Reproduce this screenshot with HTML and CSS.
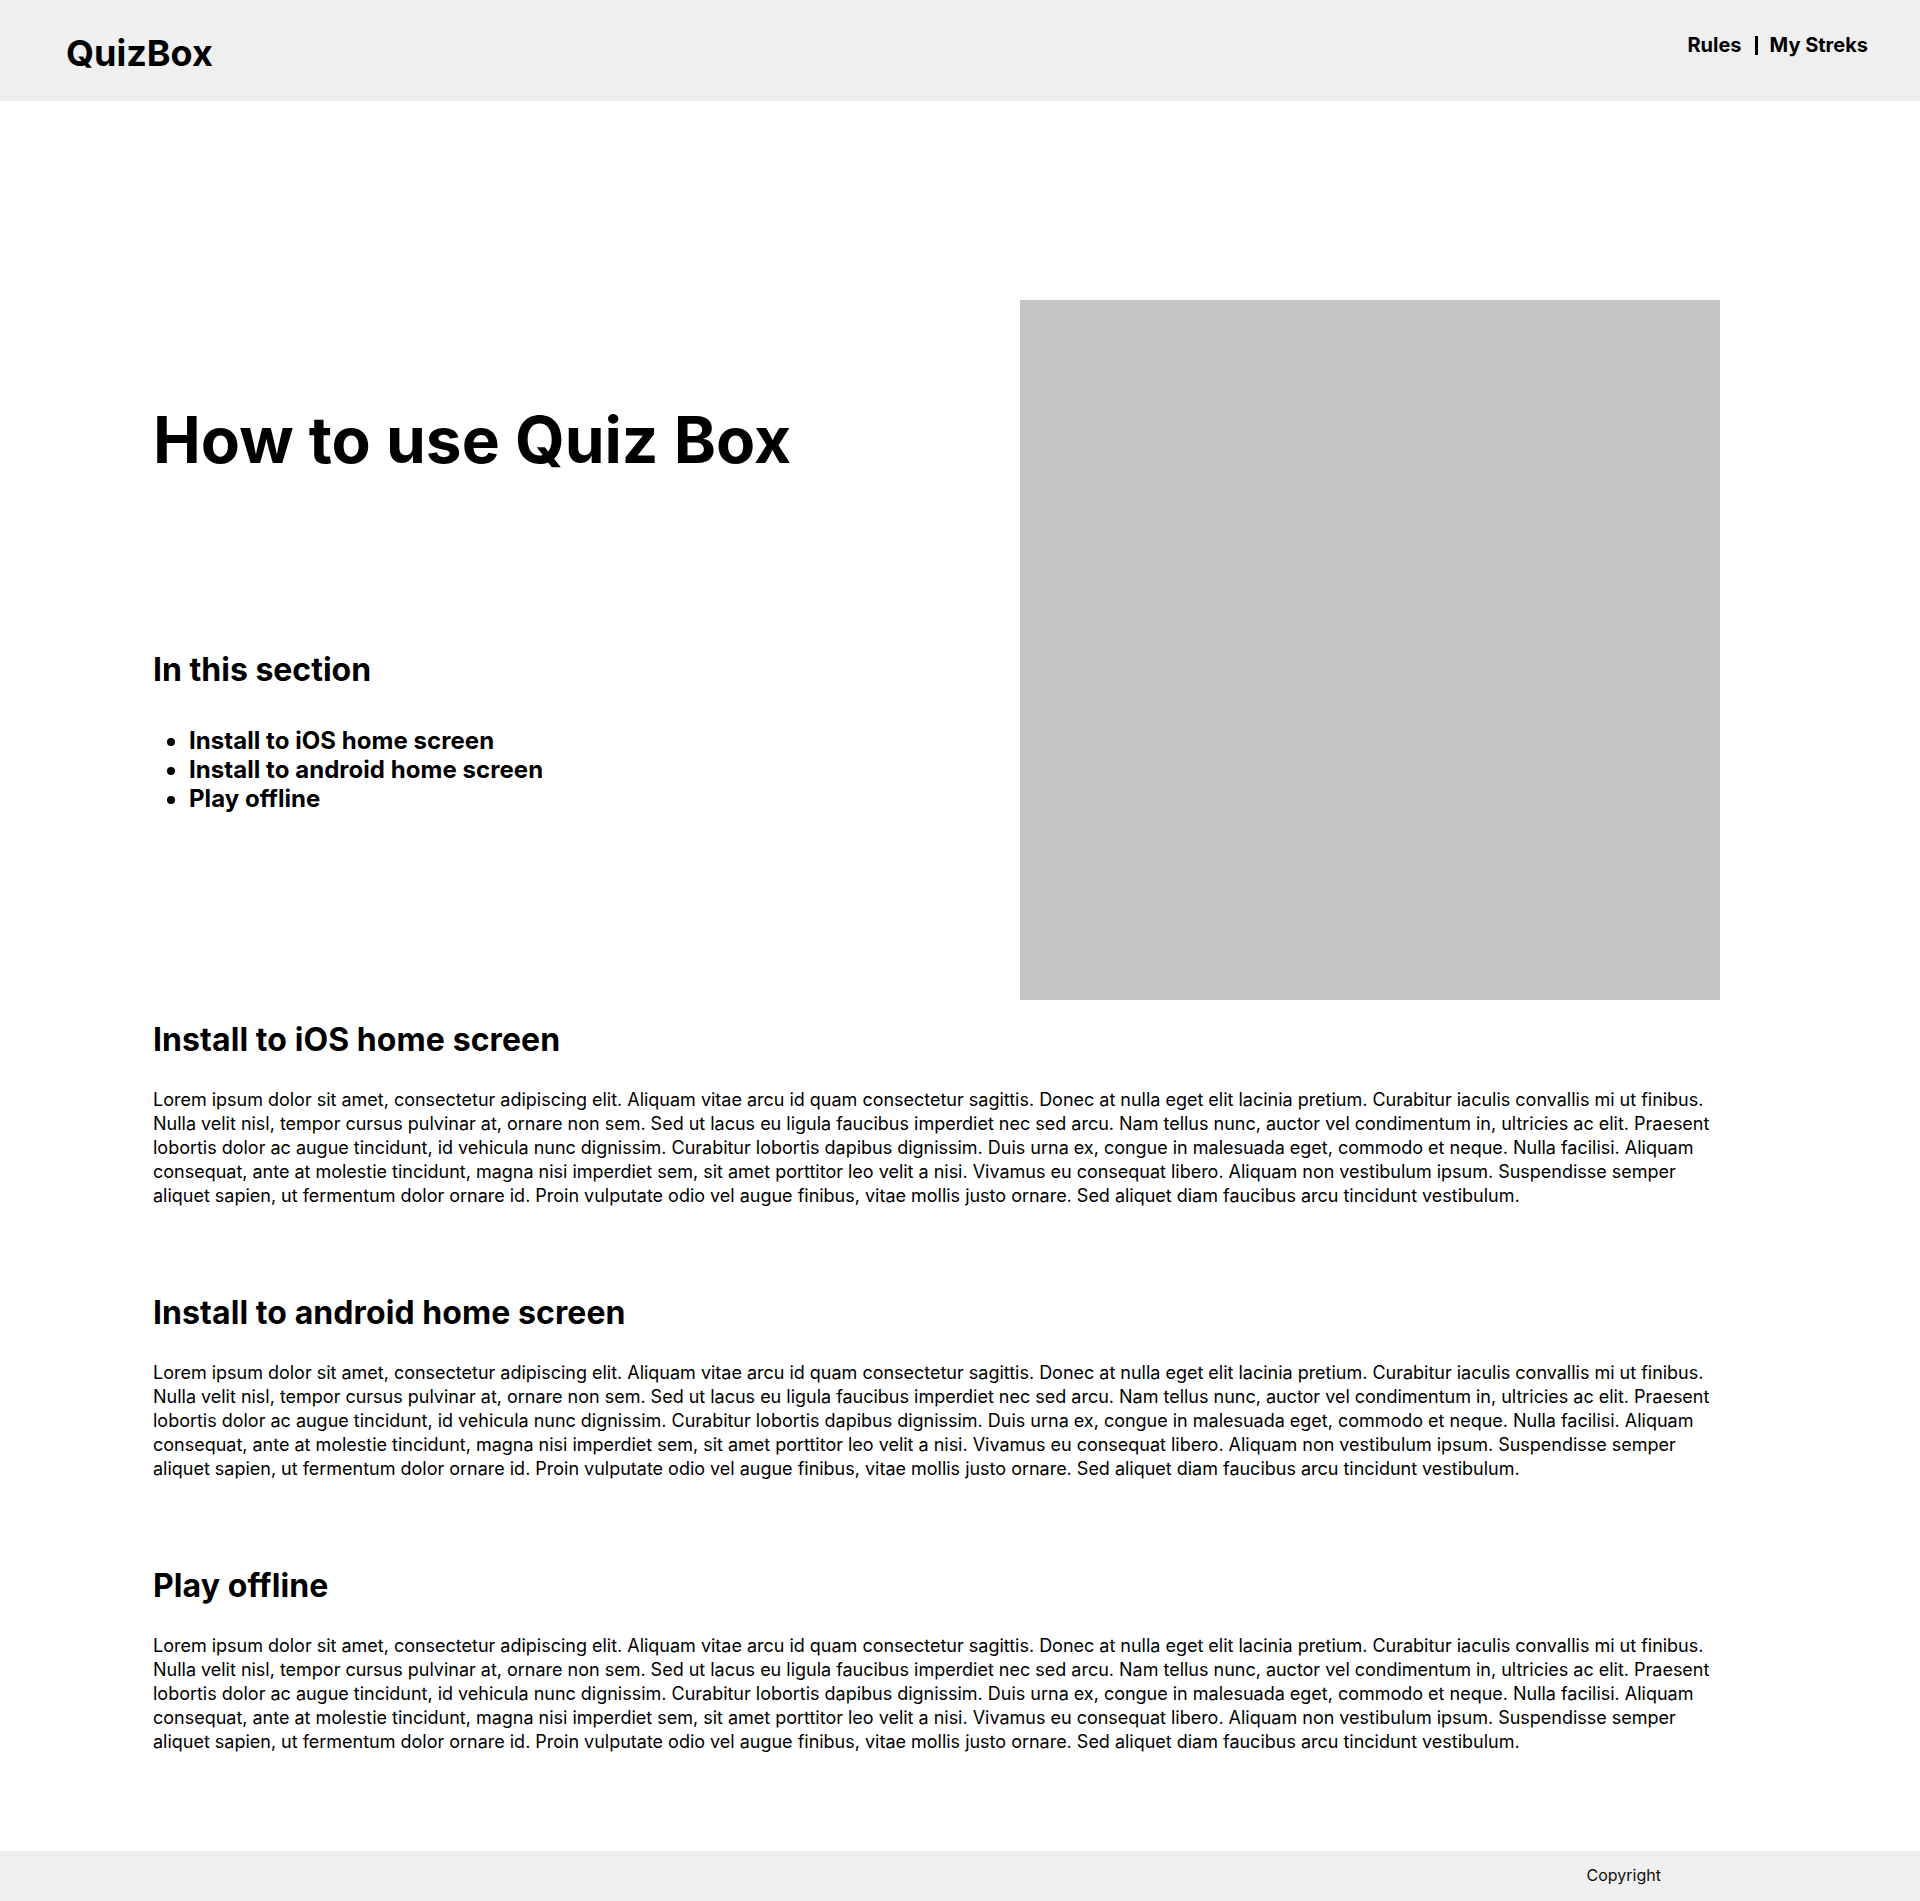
FILE: index.html
```html
<!DOCTYPE html>
<html lang="en">
<head>
<meta charset="utf-8">
<title>QuizBox - How to use</title>
<link rel="stylesheet" href="styles.css">
</head>
<body>
<header class="site-header">
  <h1 class="logo">QuizBox</h1>
  <nav class="nav">
    <a class="nav-link" href="#">Rules</a>
    <span class="nav-sep"></span>
    <a class="nav-link" href="#">My Streks</a>
  </nav>
</header>
<main class="main">
  <section class="hero">
    <div class="hero-text">
      <h2 class="hero-title">How to use Quiz Box</h2>
      <h3 class="toc-title">In this section</h3>
      <ul class="toc">
        <li>Install to iOS home screen</li>
        <li>Install to android home screen</li>
        <li>Play offline</li>
      </ul>
    </div>
    <div class="hero-image"></div>
  </section>
  <section class="article">
    <h3 class="article-title">Install to iOS home screen</h3>
    <p class="article-text">Lorem ipsum dolor sit amet, consectetur adipiscing elit. Aliquam vitae arcu id quam consectetur sagittis. Donec at nulla eget elit lacinia pretium. Curabitur iaculis convallis mi ut finibus. Nulla velit nisl, tempor cursus pulvinar at, ornare non sem. Sed ut lacus eu ligula faucibus imperdiet nec sed arcu. Nam tellus nunc, auctor vel condimentum in, ultricies ac elit. Praesent lobortis dolor ac augue tincidunt, id vehicula nunc dignissim. Curabitur lobortis dapibus dignissim. Duis urna ex, congue in malesuada eget, commodo et neque. Nulla facilisi. Aliquam consequat, ante at molestie tincidunt, magna nisi imperdiet sem, sit amet porttitor leo velit a nisi. Vivamus eu consequat libero. Aliquam non vestibulum ipsum. Suspendisse semper aliquet sapien, ut fermentum dolor ornare id. Proin vulputate odio vel augue finibus, vitae mollis justo ornare. Sed aliquet diam faucibus arcu tincidunt vestibulum.</p>
  </section>
  <section class="article">
    <h3 class="article-title">Install to android home screen</h3>
    <p class="article-text">Lorem ipsum dolor sit amet, consectetur adipiscing elit. Aliquam vitae arcu id quam consectetur sagittis. Donec at nulla eget elit lacinia pretium. Curabitur iaculis convallis mi ut finibus. Nulla velit nisl, tempor cursus pulvinar at, ornare non sem. Sed ut lacus eu ligula faucibus imperdiet nec sed arcu. Nam tellus nunc, auctor vel condimentum in, ultricies ac elit. Praesent lobortis dolor ac augue tincidunt, id vehicula nunc dignissim. Curabitur lobortis dapibus dignissim. Duis urna ex, congue in malesuada eget, commodo et neque. Nulla facilisi. Aliquam consequat, ante at molestie tincidunt, magna nisi imperdiet sem, sit amet porttitor leo velit a nisi. Vivamus eu consequat libero. Aliquam non vestibulum ipsum. Suspendisse semper aliquet sapien, ut fermentum dolor ornare id. Proin vulputate odio vel augue finibus, vitae mollis justo ornare. Sed aliquet diam faucibus arcu tincidunt vestibulum.</p>
  </section>
  <section class="article">
    <h3 class="article-title">Play offline</h3>
    <p class="article-text">Lorem ipsum dolor sit amet, consectetur adipiscing elit. Aliquam vitae arcu id quam consectetur sagittis. Donec at nulla eget elit lacinia pretium. Curabitur iaculis convallis mi ut finibus. Nulla velit nisl, tempor cursus pulvinar at, ornare non sem. Sed ut lacus eu ligula faucibus imperdiet nec sed arcu. Nam tellus nunc, auctor vel condimentum in, ultricies ac elit. Praesent lobortis dolor ac augue tincidunt, id vehicula nunc dignissim. Curabitur lobortis dapibus dignissim. Duis urna ex, congue in malesuada eget, commodo et neque. Nulla facilisi. Aliquam consequat, ante at molestie tincidunt, magna nisi imperdiet sem, sit amet porttitor leo velit a nisi. Vivamus eu consequat libero. Aliquam non vestibulum ipsum. Suspendisse semper aliquet sapien, ut fermentum dolor ornare id. Proin vulputate odio vel augue finibus, vitae mollis justo ornare. Sed aliquet diam faucibus arcu tincidunt vestibulum.</p>
  </section>
</main>
<footer class="site-footer">
  <span class="copyright">Copyright</span>
</footer>
</body>
</html>
```

FILE: styles.css
```css
* {
  box-sizing: border-box;
}

html, body {
  margin: 0;
  padding: 0;
}

body {
  font-family: Inter, "Noto Sans", sans-serif;
  color: #000;
  background: #fff;
  min-height: 100vh;
  display: flex;
  flex-direction: column;
}

.site-header {
  height: 101px;
  background: #efefef;
  display: flex;
  justify-content: space-between;
  align-items: flex-start;
  padding: 31px 52px 0 66px;
}

.logo {
  margin: 0;
  font-size: 36px;
  font-weight: 700;
  line-height: normal;
}

.nav {
  display: flex;
  align-items: flex-start;
  margin-top: 2px;
}

.nav-link {
  font-size: 20px;
  font-weight: 700;
  line-height: normal;
  color: #000;
  text-decoration: none;
}

.nav-sep {
  width: 3px;
  height: 19px;
  background: #000;
  margin: 3px 12px 0 13px;
}

.main {
  flex: 1;
  padding-left: 153px;
  width: 1720px;
}

.hero {
  display: flex;
  margin-top: 199px;
}

.hero-text {
  width: 867px;
  padding-top: 101px;
}

.hero-title {
  margin: 0;
  font-size: 64px;
  font-weight: 700;
  line-height: normal;
}

.toc-title {
  margin: 172px 0 0 0;
  font-size: 32px;
  font-weight: 700;
  line-height: normal;
}

.toc {
  margin: 37px 0 0 0;
  padding-left: 36px;
  font-size: 24px;
  font-weight: 700;
  line-height: normal;
  letter-spacing: 0.05px;
}

.hero-image {
  width: 700px;
  height: 700px;
  background: #c4c4c4;
  flex-shrink: 0;
}

.article {
  margin-top: 20px;
}

.article + .article {
  margin-top: 85px;
}

.article-title {
  margin: 0;
  font-size: 32px;
  font-weight: 700;
  line-height: normal;
  letter-spacing: 0.08px;
}

.article-text {
  margin: 29px 0 0 0;
  font-size: 18px;
  line-height: 24px;
  font-weight: 400;
  letter-spacing: -0.012px;
}

.site-footer {
  height: 50px;
  background: #efefef;
  display: flex;
  justify-content: flex-end;
  align-items: flex-start;
  padding: 14px 259px 0 0;
}

.copyright {
  font-size: 16px;
  line-height: normal;
  color: #111;
}
```
